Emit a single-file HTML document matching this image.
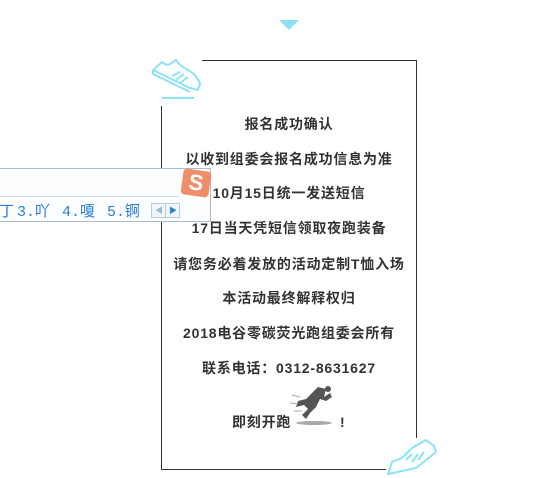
<!DOCTYPE html>
<html><head><meta charset="utf-8"><style>
body{margin:0;width:551px;height:478px;background:#fff;position:relative;overflow:hidden;font-family:"Liberation Sans","Noto Sans CJK SC",sans-serif}
.box{position:absolute;left:161px;top:60px;width:254px;height:408px;border:1px solid #333;}
.t{position:absolute;left:150px;width:278px;text-align:center;font-size:14px;font-weight:bold;color:#333;letter-spacing:0.8px;line-height:18px}
.ime{position:absolute;left:-2px;top:168px;width:211px;height:52px;border:1px solid #a9bccd;background:#fbfdff}
.c{position:absolute;top:31px;font-family:'Liberation Mono','Noto Sans CJK SC',monospace;font-size:15px;color:#2a7ed6;white-space:nowrap}
</style></head><body>
<svg style="position:absolute;left:279px;top:20px" width="20" height="10"><polygon points="0,0 20,0 10,10" fill="#8de0fa"/></svg>
<div class="box"></div>
<svg style="position:absolute;left:150px;top:56px;background:#fff" width="52" height="50" viewBox="0 0 52 50" fill="none" stroke="#8be3f8" stroke-width="2" stroke-linejoin="round">
<path d="M3,14 L12,6 Q16,10 20,8 L26,4 Q30,10 38,14 Q48,20 50,28 L48,34 L40,32 Z"/>
<path d="M3,14 L3,18 L40,36"/>
<path d="M22,20 L30,16 M26,24 L34,18 M30,27 L38,21"/>
<path d="M12,42 L44,42"/>
</svg>
<div class="t" style="top:115px">报名成功确认</div>
<div class="t" style="top:150px">以收到组委会报名成功信息为准</div>
<div class="t" style="top:184px">10月15日统一发送短信</div>
<div class="t" style="top:219px">17日当天凭短信领取夜跑装备</div>
<div class="t" style="top:255px">请您务必着发放的活动定制T恤入场</div>
<div class="t" style="top:289px">本活动最终解释权归</div>
<div class="t" style="top:324px">2018电谷零碳荧光跑组委会所有</div>
<div class="t" style="top:359px">联系电话：0312-8631627</div>
<div class="t" style="top:413px;left:232px;width:60px;text-align:left">即刻开跑</div>
<div class="t" style="top:413px;left:340px;width:10px;text-align:left">!</div>
<svg style="position:absolute;left:290px;top:385px" width="45" height="42" viewBox="0 0 45 42">
<path d="M28,2 L36,4 L34,12 L40,8 L42,12 L36,16 L30,14 L26,22 L20,28 L16,34 L12,30 L18,24 L14,20 L6,22 L8,16 L16,14 L22,8 Z" fill="#555"/>
<circle cx="38" cy="4" r="3" fill="#555"/>
<path d="M2,10 L10,12 M0,18 L8,19 M4,26 L12,26" stroke="#aaa" stroke-width="1"/>
<ellipse cx="24" cy="38" rx="18" ry="2" fill="#aaa"/>
</svg>
<svg style="position:absolute;left:386px;top:438px;background:#fff" width="52" height="40" viewBox="0 0 52 40" fill="none" stroke="#8be3f8" stroke-width="2" stroke-linejoin="round">
<path d="M2,36 L6,24 L16,20 L26,10 L40,2 L48,8 L50,14 L30,30 Z"/>
<path d="M20,22 L26,16 M26,24 L32,16 M32,22 L38,14"/>
</svg>
<div class="ime">
<div style="position:absolute;left:0;top:27px;width:180px;height:1px;background:#d8dde2"></div>
<div class="c" style="left:0">丁</div>
<div class="c" style="left:18px">3.吖</div>
<div class="c" style="left:63px">4.嗄</div>
<div class="c" style="left:108px">5.锕</div>
<div style="position:absolute;left:152px;top:34px;width:27px;height:13px;border:1px solid #b8cce0;background:#f0f6fc;font-size:8px;color:#9bc;line-height:13px"><span style="position:absolute;left:3px">◀</span><span style="position:absolute;left:13px;top:0;width:1px;height:13px;background:#b8cce0"></span><span style="position:absolute;left:17px;color:#2a7ed6">▶</span></div>
</div>
<div style="position:absolute;left:182px;top:170px;width:28px;height:26px;background:#f07a50;border-radius:4px;transform:rotate(8deg);opacity:.85;color:#fff;font-weight:bold;font-size:22px;text-align:center;line-height:26px">S</div>
</body></html>
